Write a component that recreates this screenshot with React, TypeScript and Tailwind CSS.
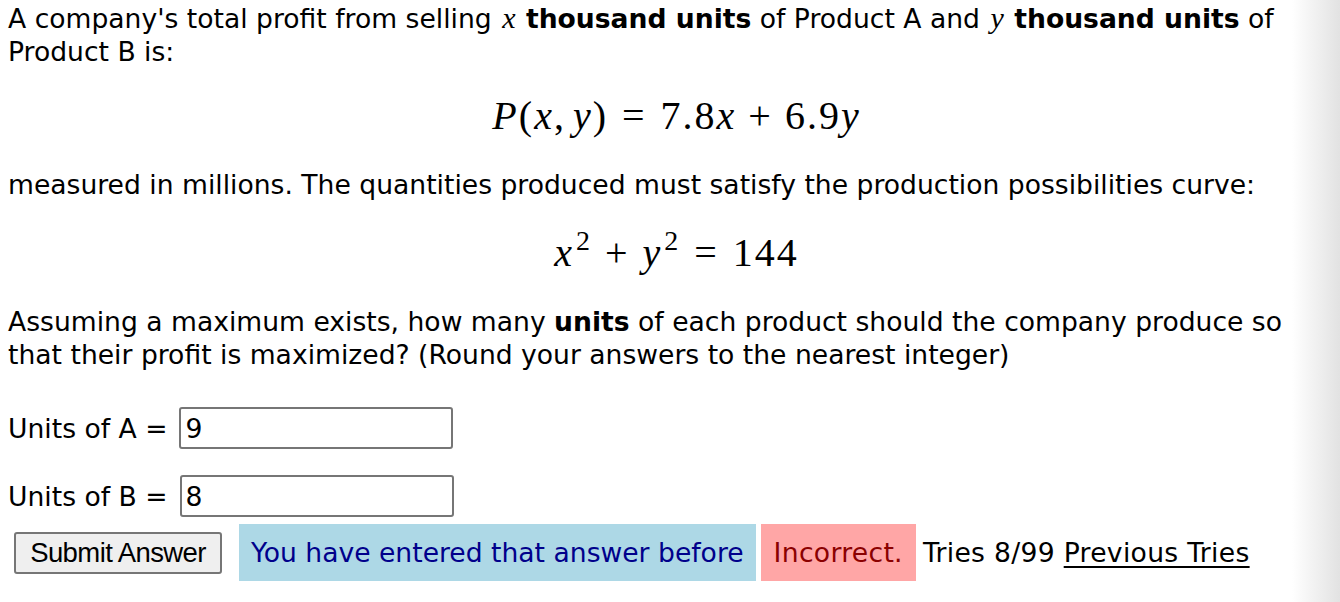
import React from "react";

const serif = "font-['Liberation_Serif','DejaVu_Serif',serif]";

const V = ({children}: {children: React.ReactNode}) => (
  <span className={`${serif} italic text-[30px] leading-none mx-[2px]`}>{children}</span>
);

export default function App() {
  return (
    <div className="relative w-[1340px] h-[602px] overflow-hidden bg-white">
      <div className="pl-2 pt-[2px] text-[26.6px] leading-[33px] text-black font-['DejaVu_Sans','Verdana',sans-serif]">
        {/* intro */}
        <p>
          A company's total profit from selling <V>x</V> <b>thousand units</b> of Product A and{" "}
          <V>y</V> <b>thousand units</b> of Product B is:
        </p>
        {/* profit equation */}
        <div className={`${serif} text-[40px] leading-[40px] tracking-[2px] text-center mt-[28px] pl-[5px]`}>
          <i>P</i>(<i>x</i>,<span className="ml-[7px]" />
          <i>y</i>)<span className="mx-[14px]">=</span>7.8<i>x</i>
          <span className="mx-[12px]">+</span>6.9<i>y</i>
        </div>
        <p className="mt-[32px]">
          measured in millions. The quantities produced must satisfy the production possibilities curve:
        </p>
        {/* constraint */}
        <div className={`${serif} text-[40px] leading-[40px] tracking-[2px] text-center mt-[32px] pl-[5px]`}>
          <i>x</i>
          <span className="relative -top-[16px] text-[28px] ml-[2px]">2</span>
          <span className="mx-[13px]">+</span>
          <i>y</i>
          <span className="relative -top-[16px] text-[28px] ml-[2px]">2</span>
          <span className="mx-[14px]">=</span>144
        </div>
        <p className="mt-[28px] pr-[40px]">
          Assuming a maximum exists, how many <b>units</b> of each product should the company produce so
          that their profit is maximized? (Round your answers to the nearest integer)
        </p>
        {/* answers */}
        <div className="flex items-center mt-[36px] h-[42px]">
          <span>Units of A =</span>
          <input
            readOnly
            value="9"
            className="ml-[12px] w-[274px] h-[42px] border-2 border-[#767676] rounded-[3px] px-[4px] text-[26.6px] outline-none"
          />
        </div>
        <div className="flex items-center mt-[26px] h-[42px]">
          <span>Units of B =</span>
          <input
            readOnly
            value="8"
            className="ml-[12px] w-[274px] h-[42px] border-2 border-[#767676] rounded-[3px] px-[4px] text-[26.6px] outline-none"
          />
        </div>
        {/* submit row */}
        <div className="flex items-center mt-[7px] h-[57px]">
          <button className="ml-[6px] h-[42px] w-[208px] bg-[#efefef] border-2 border-[#767676] rounded-[3px] text-[27.5px] leading-none font-['Liberation_Sans',Arial,sans-serif] tracking-[-0.6px]">
            Submit Answer
          </button>
          <span className="ml-[17px] h-[57px] flex items-center px-[12px] bg-[#add8e6] text-[#00008b]">
            You have entered that answer before
          </span>
          <span className="ml-[5px] h-[57px] flex items-center px-[13px] bg-[#ffa6a6] text-[#8b0000] tracking-[0.3px]">
            Incorrect.
          </span>
          <span className="ml-[7px] tracking-[0.3px]">
            Tries 8/99 <span className="underline underline-offset-[4px]">Previous Tries</span>
          </span>
        </div>
      </div>
      {/* right edge shade */}
      <div className="absolute top-0 right-0 w-[48px] h-full bg-gradient-to-r from-white/0 to-[#e2e2e2]" />
    </div>
  );
}
